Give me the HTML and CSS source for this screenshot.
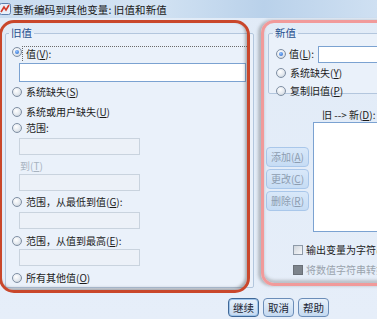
FILE: index.html
```html
<!DOCTYPE html>
<html>
<head>
<meta charset="utf-8">
<link rel="stylesheet" href="styles.css">
</head>
<body>
<div class="win">
  <div class="titlebar">
    <svg class="appicon" width="12" height="14" viewBox="0 0 12 14">
      <rect x="0.5" y="1.5" width="11" height="11" rx="2" fill="#e9f0fa" stroke="#5d7fae"/>
      <path d="M2 10 L5 5 L7 8 L10 3" fill="none" stroke="#d23a2a" stroke-width="1.6"/>
    </svg>
    <span class="title">重新编码到其他变量: 旧值和新值</span>
  </div>
  <div class="main">
    <fieldset class="group old">
      <legend>旧值</legend>
      <div class="row r-v"><span class="radio on"></span><span class="lbl focus">值(<u>V</u>):</span></div>
      <div class="box wide"></div>
      <div class="row r-s"><span class="radio"></span><span class="lbl">系统缺失(<u>S</u>)</span></div>
      <div class="row r-u"><span class="radio"></span><span class="lbl">系统或用户缺失(<u>U</u>)</span></div>
      <div class="row r-r"><span class="radio"></span><span class="lbl">范围:</span></div>
      <div class="box small b1"></div>
      <div class="row r-t"><span class="lbl dim">到(<u>T</u>)</span></div>
      <div class="box small"></div>
      <div class="row r-g"><span class="radio"></span><span class="lbl">范围，从最低到值(<u>G</u>):</span></div>
      <div class="box small b1"></div>
      <div class="row r-e"><span class="radio"></span><span class="lbl">范围，从值到最高(<u>E</u>):</span></div>
      <div class="box small"></div>
      <div class="row r-o"><span class="radio"></span><span class="lbl">所有其他值(<u>O</u>)</span></div>
    </fieldset>
    <div class="rightcol">
      <fieldset class="group new">
        <legend>新值</legend>
        <div class="row n-l"><span class="radio on"></span><span class="lbl">值(<u>L</u>):</span><div class="box newval"></div></div>
        <div class="row n-y"><span class="radio"></span><span class="lbl">系统缺失(<u>Y</u>)</span></div>
        <div class="row n-p"><span class="radio"></span><span class="lbl">复制旧值(<u>P</u>)</span></div>
      </fieldset>
      <div class="lower">
        <div class="btncol">
          <div class="dbtn">添加(<u>A</u>)</div>
          <div class="dbtn">更改(<u>C</u>)</div>
          <div class="dbtn">删除(<u>R</u>)</div>
        </div>
        <div class="listcol">
          <div class="listlbl">旧 --&gt; 新(<u>D</u>):</div>
          <div class="listbox"></div>
        </div>
      </div>
      <div class="chk c1"><span class="cbox"></span><span class="lbl">输出变量为字符串</span></div>
      <div class="chk c2"><span class="cbox dis"></span><span class="lbl gray">将数值字符串转换为数值</span></div>
    </div>
  </div>
  <div class="footer">
    <div class="btn def">继续</div>
    <div class="btn">取消</div>
    <div class="btn">帮助</div>
  </div>
  <div class="anno red"></div>
  <div class="anno pink"></div>
</div>
</body>
</html>
```
FILE: styles.css
```css
html, body {
  margin: 0;
  padding: 0;
}
body {
  width: 377px;
  height: 319px;
  overflow: hidden;
  background: #e4edf8;
  font-family: "Noto Sans CJK SC", "Noto Sans", sans-serif;
  font-size: 10px;
  color: #1c1c1c;
}
.win {
  position: relative;
  width: 377px;
  height: 319px;
  overflow: hidden;
  background: linear-gradient(#e1ebf7, #e6eef9);
}
u { text-decoration: underline; }

.titlebar {
  height: 18px;
  display: flex;
  align-items: center;
  background: linear-gradient(90deg, #c9dcf0 0%, #d3e3f3 40%, #b9d1ea 70%, #cfe0f2 100%);
}
.appicon { margin-left: -1px; margin-right: 2px; }
.title {
  font-size: 10.5px;
  color: #1a1a1a;
  letter-spacing: 0.1px;
}

.main {
  display: flex;
  align-items: flex-start;
  padding-top: 8px;
  height: 261px;
  width: 600px;
}

.group {
  margin: 0;
  padding: 0;
  border: 1px solid #b3c6dd;
  border-radius: 2px;
  background: #eaf1fa;
  flex: none;
}
.group legend {
  padding: 0 2px;
  margin-left: 3px;
  height: 14px;
  line-height: 14px;
  font-size: 10.5px;
  color: #27508e;
}
.old {
  margin-left: 5px;
  width: 247px;
  height: 260px;
}

.row {
  display: flex;
  align-items: center;
  height: 16px;
  padding-left: 6px;
}
.radio {
  width: 8px;
  height: 8px;
  border-radius: 50%;
  border: 1px solid #7f8fa3;
  background: radial-gradient(circle at 40% 35%, #ffffff 0%, #e3e8ee 55%, #b9c3ce 100%);
  flex: none;
  position: relative;
}
.radio.on::after {
  content: "";
  position: absolute;
  left: 2px;
  top: 2px;
  width: 4px;
  height: 4px;
  border-radius: 50%;
  background: radial-gradient(circle at 40% 35%, #8fc0ff, #1f62c8);
}
.lbl {
  margin-left: 4px;
  white-space: nowrap;
  line-height: 14px;
}
.focus {
  margin-left: 0;
  padding-left: 3px;
  flex: 1;
  height: 14px;
  border-top: 1px dotted #6a6a6a;
  border-left: 1px dotted #6a6a6a;
  margin-top: 2px;
  margin-right: 6px;
}
.dim { color: #a8b3bf; margin-left: 8px; }

.box {
  box-sizing: border-box;
  background: #ffffff;
  border: 1px solid #7ba2d1;
}
.wide {
  margin: 3px 0 0 13px;
  width: 227px;
  height: 19px;
}
.small {
  margin-left: 13px;
  width: 121px;
  height: 17px;
  background: #ecf1f8;
  border-color: #c9d3de;
}
.b1 { margin-top: 2px; }
.r-v { margin-top: 4px; }
.r-s { margin-top: 2px; }
.r-u { margin-top: 4px; }
.r-r { margin-top: 0; }
.r-t { margin-top: 3px; }
.r-g { margin-top: 3px; }
.r-e { margin-top: 4px; }
.r-o { margin-top: 4px; }

.rightcol {
  margin-left: 12px;
  width: 200px;
  flex: none;
  display: flex;
  flex-direction: column;
}
.new {
  margin-left: 2px;
  width: 180px;
  height: 66px;
  padding-left: 1px;
}
.n-l { margin-top: 6px; }
.n-l .lbl { margin-left: 3px; }
.n-y { margin-top: 3px; }
.n-p { margin-top: 2px; }
.newval {
  margin-left: 4px;
  width: 90px;
  height: 17px;
  flex: none;
}
.lower {
  display: flex;
  align-items: flex-start;
}
.btncol {
  margin-top: 53px;
  display: flex;
  flex-direction: column;
  gap: 2px;
  flex: none;
}
.dbtn {
  box-sizing: border-box;
  width: 43px;
  height: 20px;
  line-height: 18px;
  text-align: center;
  color: #8d9db0;
  border: 1px solid #a9c7ea;
  border-radius: 4px;
  background: linear-gradient(#d9e8f9, #c6dcf4);
}
.listcol {
  margin-left: 4px;
  margin-top: 14px;
  flex: none;
}
.listlbl {
  margin-left: 9px;
  height: 14px;
  line-height: 14px;
  white-space: nowrap;
}
.listbox {
  box-sizing: border-box;
  width: 90px;
  height: 110px;
  background: #ffffff;
  border: 1px solid #7ba2d1;
}
.chk {
  display: flex;
  align-items: center;
  height: 16px;
  margin-left: 27px;
}
.c1 { margin-top: 10px; }
.c2 { margin-top: 4px; }
.cbox {
  box-sizing: border-box;
  width: 10px;
  height: 10px;
  flex: none;
  border: 1px solid #8e9aa8;
  background: linear-gradient(135deg, #cfd5dc, #f6f7f9);
}
.cbox.dis {
  background: #7d848c;
  border-color: #6a7078;
}
.chk .lbl { margin-left: 3px; }
.gray { color: #9aa3ad; }

.footer {
  display: flex;
  gap: 4px;
  padding-left: 228px;
  margin-top: 11px;
}
.btn {
  box-sizing: border-box;
  width: 31px;
  height: 19px;
  line-height: 17px;
  text-align: center;
  font-size: 10.5px;
  border: 1px solid #6b8db8;
  border-radius: 4px;
  background: linear-gradient(#e8f1fb, #c4d9f0);
  color: #1a2433;
}
.btn.def {
  border-color: #3e6797;
  box-shadow: inset 0 0 0 1px #9fc4ea;
}

.anno {
  position: absolute;
  box-sizing: border-box;
  pointer-events: none;
}
.red {
  left: -1px;
  top: 20px;
  width: 251px;
  height: 273px;
  border: 3px solid #c9472b;
  border-radius: 15px;
  box-shadow: inset -2px -2px 3px rgba(90, 90, 90, 0.45);
}
.pink {
  left: 261px;
  top: 20px;
  width: 140px;
  height: 266px;
  border: 3px solid #f19a9a;
  border-radius: 13px;
  box-shadow: -3px 0 3px rgba(90, 90, 90, 0.35), inset 0 -3px 3px rgba(90, 90, 90, 0.3);
}
```
